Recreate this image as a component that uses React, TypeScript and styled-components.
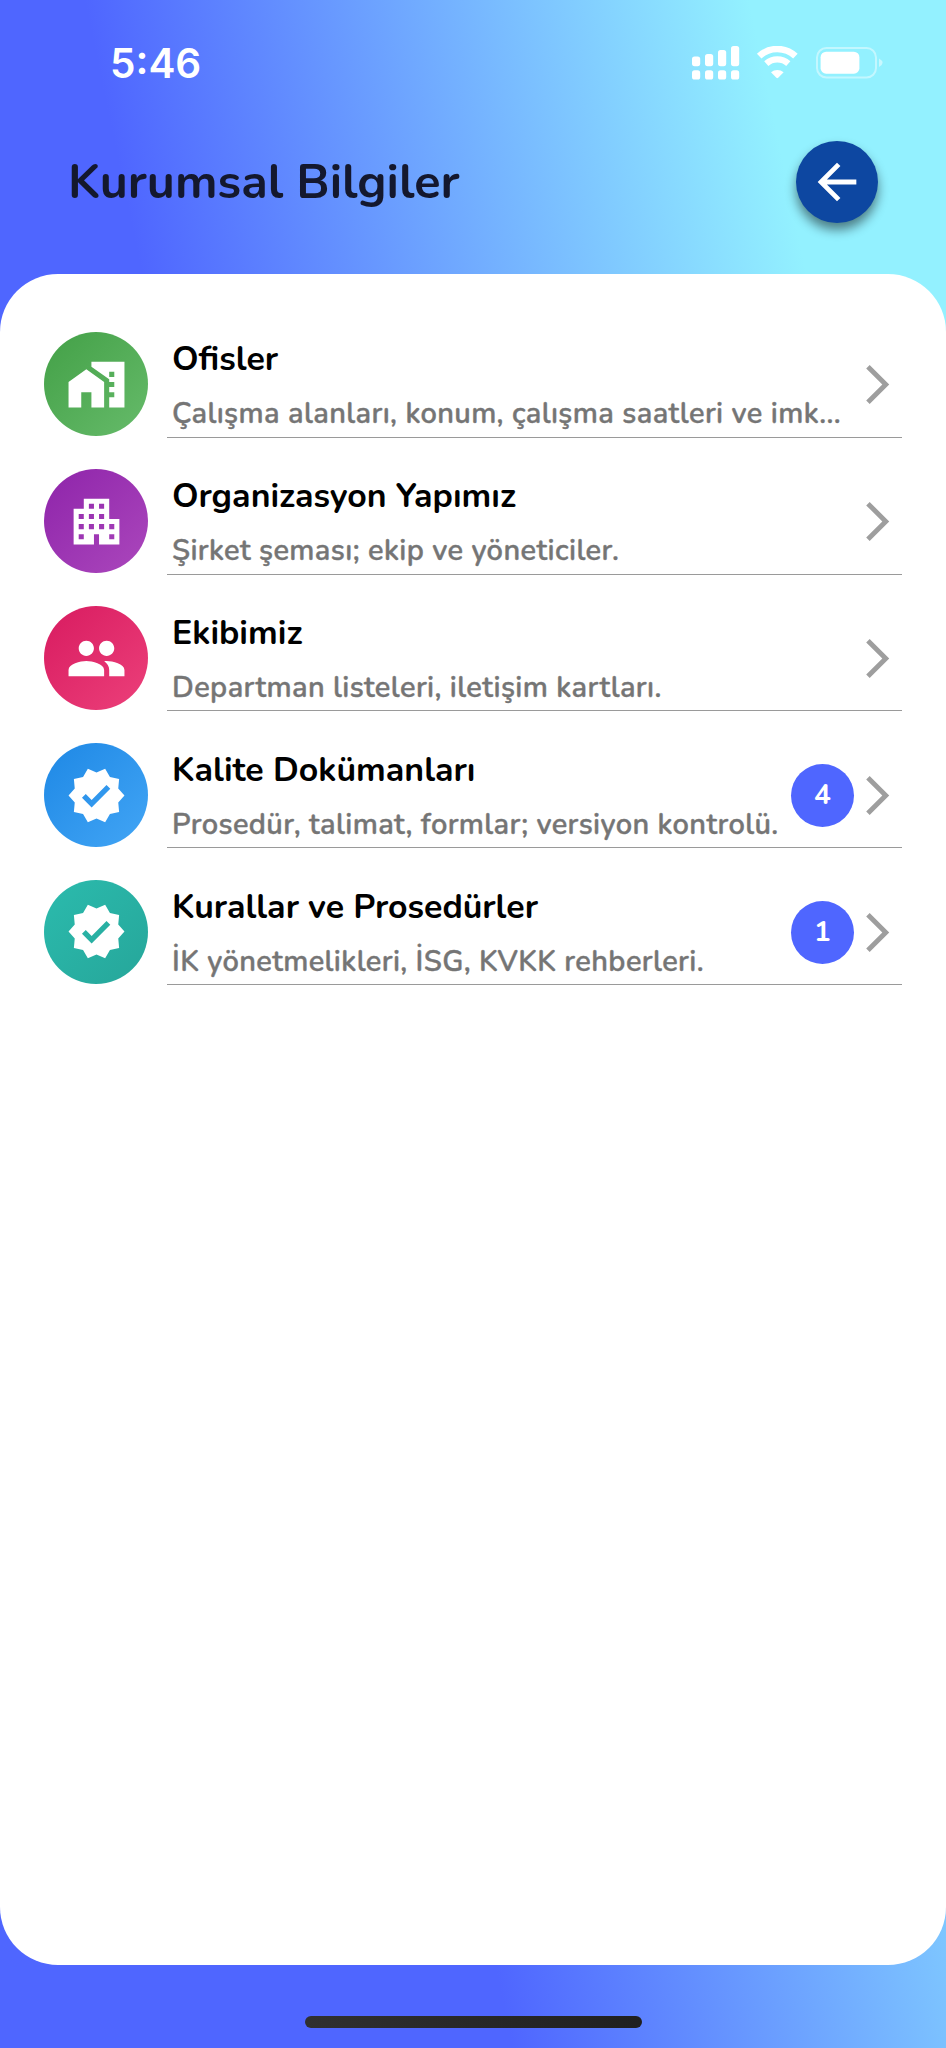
import React from "react";
import styled, { createGlobalStyle } from "styled-components";
import { MdApartment, MdArrowBack, MdArrowForwardIos, MdHomeWork, MdPeople, MdVerified } from "react-icons/md";
import type { IconType } from "react-icons";

const GlobalStyle = createGlobalStyle`
  *, *::before, *::after { box-sizing: border-box; }
  body { margin: 0; }
`;

const Screen = styled.div`
  display: flex;
  flex-direction: column;
  width: 946px;
  height: 2048px;
  overflow: hidden;
  background: linear-gradient(78.2deg, #4f66ff 37.3%, #93f1ff 85.7%);
  font-family: "Nunito", "Noto Sans", sans-serif;
`;

const StatusBar = styled.div`
  display: flex;
  align-items: center;
  justify-content: space-between;
  height: 127px;
  padding: 0 62px 0 110px;
`;

const Clock = styled.time`
  color: #fff;
  font: 600 40.5px/50px "Inter", sans-serif;
`;

const StatusIcons = styled.svg`
  display: block;
  width: 192px;
  height: 36px;
`;

const Header = styled.header`
  display: flex;
  align-items: center;
  justify-content: space-between;
  height: 147px;
  padding: 0 68px 37px 68px;
`;

const PageTitle = styled.h1`
  margin: 0;
  color: #14182e;
  font-size: 48.5px;
  font-weight: 700;
  line-height: 66px;
`;

const BackButton = styled.button`
  display: grid;
  place-items: center;
  width: 82px;
  height: 82px;
  padding: 0;
  border: 0;
  border-radius: 50%;
  background: #0d47a1;
  color: #fff;
  box-shadow: 0 7px 11px rgba(0, 0, 0, 0.48);
`;

const Card = styled.main`
  display: flex;
  flex-direction: column;
  gap: 32.5px;
  height: 1691px;
  padding: 58.4px 44px;
  border-radius: 58px;
  background: #fff;
`;

const Row = styled.div`
  display: flex;
  gap: 19px;
  height: 104.4px;
`;

const Avatar = styled.div<{ $from: string; $to: string }>`
  display: grid;
  flex: none;
  place-items: center;
  width: 104px;
  height: 104px;
  border-radius: 50%;
  background: linear-gradient(135deg, ${(p) => p.$from}, ${(p) => p.$to});
  color: #fff;
`;

const RowBody = styled.div`
  display: flex;
  flex: 1;
  align-items: center;
  min-width: 0;
  height: 105.3px;
  padding: 0 1px 0 5px;
  border-bottom: 1px solid #9a9a9a;
`;

const RowText = styled.div`
  flex: 1;
  min-width: 0;
  padding-top: 1px;
  white-space: nowrap;
`;

const RowTitle = styled.div`
  color: #000;
  font-size: 33.9px;
  font-weight: 700;
  line-height: 46px;
`;

const RowNote = styled.div`
  margin-top: 12px;
  color: #757575;
  font-size: 29px;
  font-weight: 600;
  line-height: 40px;
  letter-spacing: 0.38px;
  -webkit-text-stroke: 0.4px #757575;
`;

const Badge = styled.span`
  display: grid;
  flex: none;
  place-items: center;
  width: 63px;
  height: 63px;
  border-radius: 50%;
  background: #4f66ff;
  color: #fff;
  font-size: 28px;
  font-weight: 700;
  line-height: 38px;
`;

const Chevron = styled(MdArrowForwardIos)`
  flex: none;
  color: #9e9e9e;
`;

const HomeBar = styled.div`
  width: 337px;
  height: 12px;
  margin: 51px auto 0;
  border-radius: 6px;
  background: linear-gradient(90deg, #303030, #202020);
`;

interface Entry {
  title: string;
  note: string;
  icon: IconType;
  from: string;
  to: string;
  count?: number;
}

const entries: Entry[] = [
  { title: "Ofisler", note: "Çalışma alanları, konum, çalışma saatleri ve imk...", icon: MdHomeWork, from: "#43a047", to: "#66bb6a" },
  { title: "Organizasyon Yapımız", note: "Şirket şeması; ekip ve yöneticiler.", icon: MdApartment, from: "#8e24aa", to: "#ab47bc" },
  { title: "Ekibimiz", note: "Departman listeleri, iletişim kartları.", icon: MdPeople, from: "#d81b60", to: "#ec407a" },
  { title: "Kalite Dokümanları", note: "Prosedür, talimat, formlar; versiyon kontrolü.", icon: MdVerified, from: "#1e88e5", to: "#42a5f5", count: 4 },
  { title: "Kurallar ve Prosedürler", note: "İK yönetmelikleri, İSG, KVKK rehberleri.", icon: MdVerified, from: "#2bbbad", to: "#26a69a", count: 1 },
];

const bars = [
  { x: 0, top: 10.5 },
  { x: 13, top: 8 },
  { x: 26, top: 4 },
  { x: 39, top: 0 },
];

function StatusGlyphs() {
  return (
    <StatusIcons viewBox="0 0 192 36" fill="#fff">
      {bars.map((b) => (
        <g key={b.x}>
          <rect x={b.x} y={b.top} width="8.2" height={20.2 - b.top} rx="2.6" />
          <rect x={b.x} y="24.3" width="8.2" height="9.2" rx="2.6" />
        </g>
      ))}
      <g fill="none" stroke="#fff">
        <path d="M67.2 10.2A26.5 26.5 0 0 1 103.4 10.2" strokeWidth="6.6" />
        <path d="M74.3 17.6A16.4 16.4 0 0 1 96.3 17.6" strokeWidth="6.2" />
      </g>
      <path d="M79 26.2A10 10 0 0 1 91.6 26.2L86.2 31.8Q85.3 32.6 84.4 31.8Z" />
      <rect x="125" y="2" width="59" height="29.6" rx="9.5" fill="none" stroke="#fff" strokeOpacity="0.45" strokeWidth="2" />
      <rect x="128.6" y="5.7" width="38.8" height="22" rx="5.5" />
      <path d="M187 12.5Q190.6 14.6 190.6 16.8T187 21Z" fillOpacity="0.5" />
    </StatusIcons>
  );
}

export default function App() {
  return (
    <>
      <GlobalStyle />
      <Screen>
        <StatusBar>
          <Clock>5:46</Clock>
          <StatusGlyphs />
        </StatusBar>
        <Header>
          <PageTitle>Kurumsal Bilgiler</PageTitle>
          <BackButton aria-label="Geri">
            <MdArrowBack size={58} />
          </BackButton>
        </Header>
        <Card>
          {entries.map(({ title, note, icon: Icon, from, to, count }) => (
            <Row key={title}>
              <Avatar $from={from} $to={to}>
                <Icon size={61} />
              </Avatar>
              <RowBody>
                <RowText>
                  <RowTitle>{title}</RowTitle>
                  <RowNote>{note}</RowNote>
                </RowText>
                {count !== undefined && <Badge>{count}</Badge>}
                <Chevron size={47} />
              </RowBody>
            </Row>
          ))}
        </Card>
        <HomeBar />
      </Screen>
    </>
  );
}
